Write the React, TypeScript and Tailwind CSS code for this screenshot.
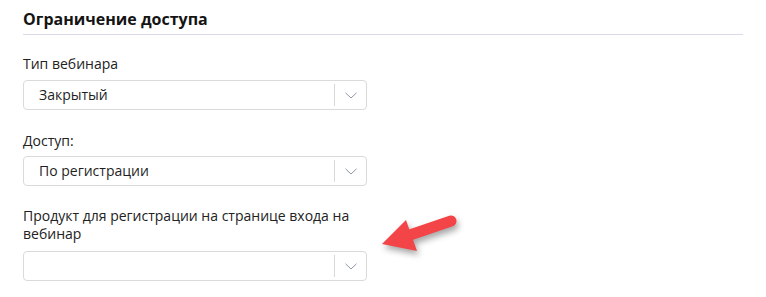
import React from 'react';

const Chevron = () => (
  <svg width="12" height="7" viewBox="0 0 12 7" fill="none">
    <path d="M0.5 0.8 L6 6 L11.5 0.8" stroke="#8e98a8" strokeWidth="1" />
  </svg>
);

const Select = ({ value }: { value?: string }) => (
  <div className="flex h-[30px] w-[344px] items-center rounded-[4px] border border-[#dadada] bg-white">
    <div className="flex-1 pl-[15px] text-[14px] leading-[20px] text-[#1f1f1f]">{value}</div>
    <div className="h-[22px] w-px bg-[#d8d8d8]" />
    <div className="flex w-[31px] items-center justify-center">
      <Chevron />
    </div>
  </div>
);

export default function App() {
  return (
    <div className="relative h-[297px] w-[766px] bg-white font-['Open_Sans',sans-serif]">
      <div className="w-[743px] pl-[23px] pt-[7px]">
        <h2 className="border-b border-[#dcd9e8] pb-[3px] text-[16px] font-bold leading-[24px] text-[#141414]">
          Ограничение доступа
        </h2>

        <div className="mt-[20px] w-[344px]">
          <div className="mb-[7px] text-[14px] leading-[18px] text-[#222]">Тип вебинара</div>
          <Select value="Закрытый" />
        </div>

        <div className="mt-[22px] w-[344px]">
          <div className="mb-[6px] text-[14px] leading-[18px] text-[#222]">Доступ:</div>
          <Select value="По регистрации" />
        </div>

        <div className="mt-[21px] w-[344px]">
          <div className="mb-[8px] text-[14px] leading-[18px] text-[#222]">
            Продукт для регистрации на странице входа на вебинар
          </div>
          <Select />
        </div>
      </div>

      {/* annotation arrow */}
      <svg
        className="absolute left-[376px] top-[206px] drop-shadow-[2px_4px_3px_rgba(0,0,0,0.35)]"
        width="90"
        height="52"
        viewBox="0 0 90 52"
      >
        <line x1="28" y1="31" x2="75" y2="15" stroke="#f34447" strokeWidth="11" strokeLinecap="round" />
        <polygon points="6,38 30,14 41,45" fill="#f34447" />
      </svg>
    </div>
  );
}
